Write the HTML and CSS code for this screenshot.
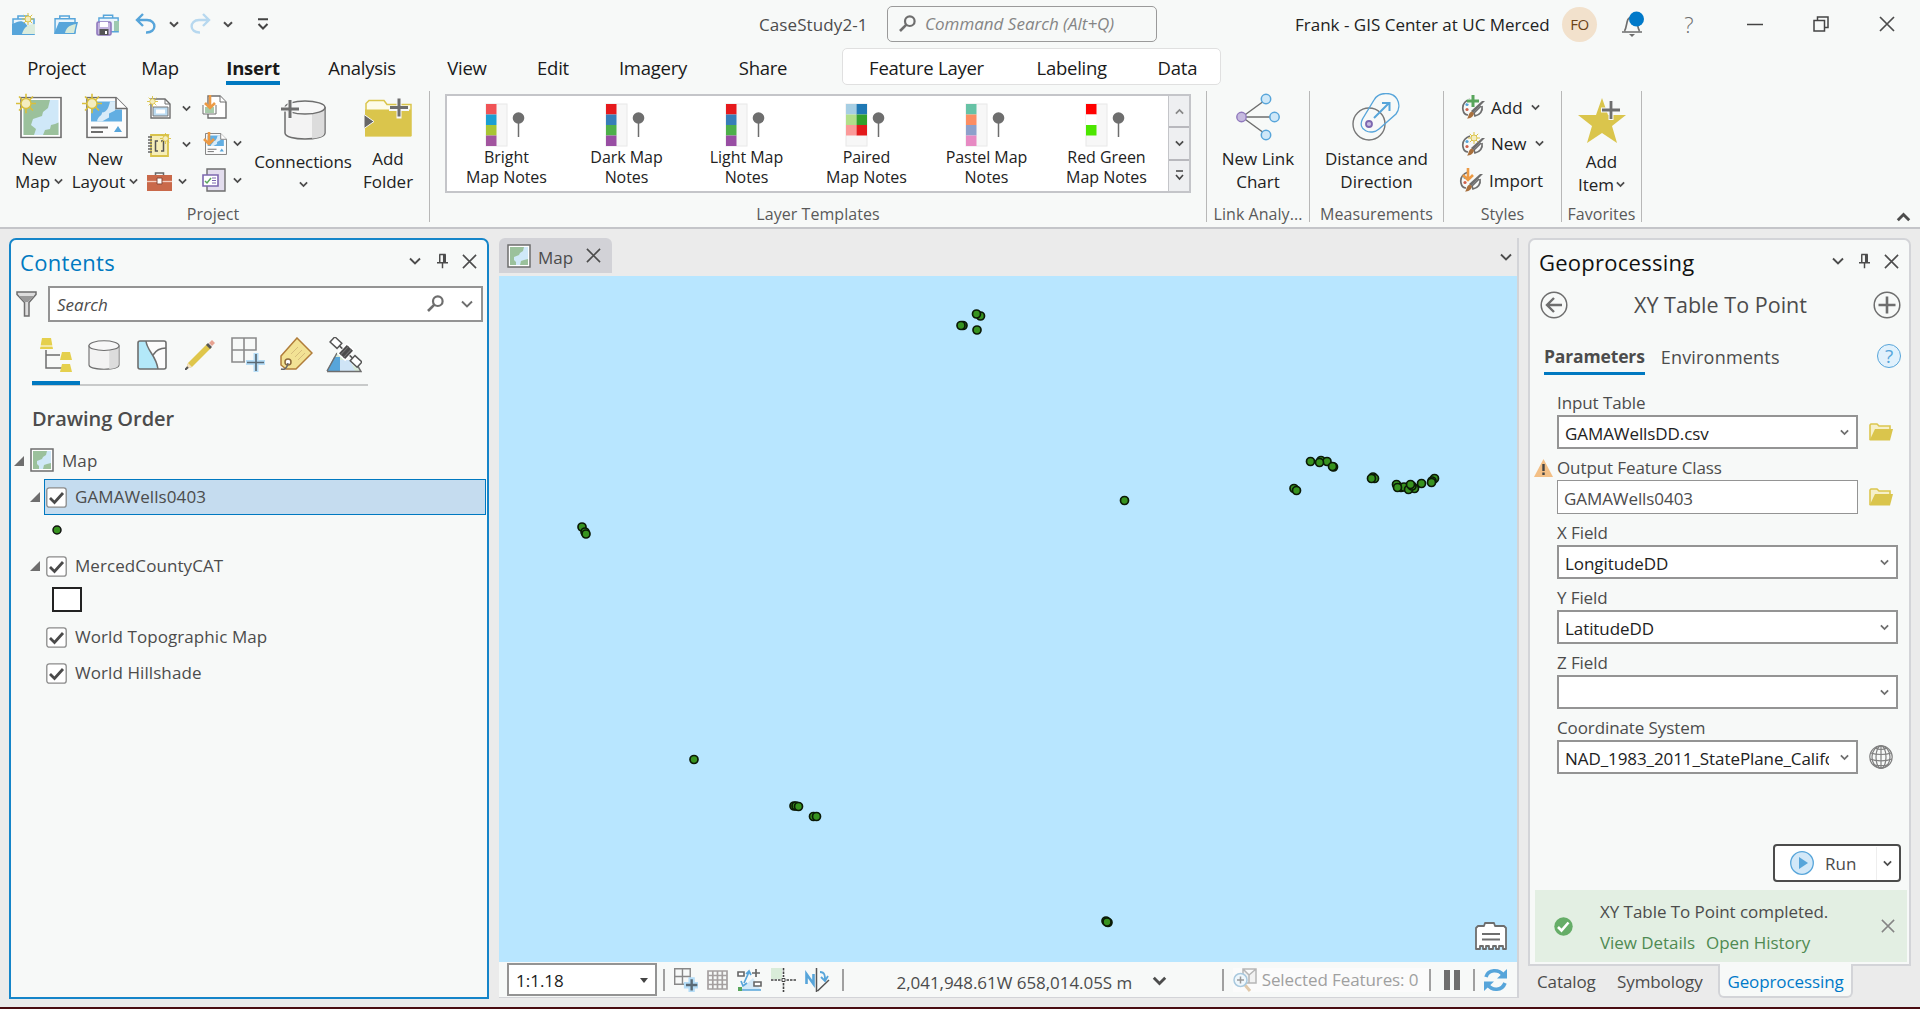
FILE: index.html
```html
<!DOCTYPE html>
<html lang="en">
<head>
<meta charset="utf-8">
<title>CaseStudy2-1</title>
<link rel="stylesheet" href="styles.css">
</head>
<body>
<svg class="sprite" aria-hidden="true">
  <symbol id="chev" viewBox="0 0 10 7"><path d="M1 1.2 5 5.2 9 1.2" fill="none" stroke="currentColor" stroke-width="2"/></symbol>
  <symbol id="chevthin" viewBox="0 0 12 9"><path d="M1 1.5 6 6.500 11 1.500" fill="none" stroke="currentColor" stroke-width="1.900"/></symbol>
  <symbol id="close" viewBox="0 0 16 16"><path d="M1 1 15 15M15 1 1 15" fill="none" stroke="currentColor" stroke-width="1.7"/></symbol>
  <symbol id="pin" viewBox="0 0 12 16"><path d="M2.5 1h7M3 1v9M9 1v9M0 10h12M6 10v6" fill="none" stroke="currentColor" stroke-width="1.6"/><path d="M6.5 1h2.5v9h-2.5z" fill="currentColor"/></symbol>
  <symbol id="lens" viewBox="0 0 17 17"><circle cx="10.8" cy="6.2" r="4.8" fill="none" stroke="currentColor" stroke-width="2.2"/><path d="M7.4 9.6 1 16" stroke="currentColor" stroke-width="2.6"/></symbol>
  <symbol id="sun" viewBox="0 0 20 20"><path d="M10 0v20M0 10h20M3 3l14 14M17 3 3 17" stroke="#d9bf3c" stroke-width="1.6"/><circle cx="10" cy="10" r="5" fill="#f4edc0" stroke="#d9bf3c" stroke-width="1.4"/></symbol>
  <symbol id="mapicon" viewBox="0 0 42 42"><path d="M1 1h40v40H1z" fill="#fff" stroke="#6e6e6e" stroke-width="1.6"/><path d="M3.500 3.500h35v35h-35z" fill="#cfe8f8"/><path d="M3.500 3.500H30l-2 8-5 4-1 4-9 3-2 6 5 4-2 6H3.500zM38.500 26v12.500H23l2-5 5-1 1-4 4-1z" fill="#9bc19c"/></symbol>
  <symbol id="mapmini" viewBox="0 0 24 24"><path d="M1 1h22v22H1z" fill="#fff" stroke="#6e6e6e" stroke-width="1.500"/><path d="M3 3h18v18H3z" fill="#cfe8f8"/><path d="M3 3h14l-1 4-3 2-1 2-5 2v3l2 2v3H3zM21 15v6h-8l1-4 3-1z" fill="#9bc19c"/></symbol>
  <symbol id="folder" viewBox="0 0 24 18"><path d="M1 17V2l1-1h6l2 2h11v5" fill="#f6f0c9" stroke="#dcc64e" stroke-width="1.6"/><path d="M.5 17.500 6 6h18l-3 11.500z" fill="#dac54c"/></symbol>
  <symbol id="check" viewBox="0 0 21 21"><rect x=".8" y=".8" width="19.400" height="19.400" rx="2.500" fill="#fff" stroke="#8a8a8a" stroke-width="1.3"/><path d="M4 11l4.500 4.500L17 6" fill="none" stroke="#4a4a4a" stroke-width="2.800"/></symbol>
  <symbol id="exp" viewBox="0 0 10 10"><path d="M10 0v10H0z" fill="#6e6e6e"/></symbol>
  <symbol id="cyl" viewBox="0 0 42 40"><path d="M1 7v26c0 8 40 8 40 0V7" fill="#f3f3f3" stroke="#6e6e6e" stroke-width="1.5"/><path d="M28 13c8-1 12.300-3 12.300-6v26c0 3-4 5-12.300 5.500z" fill="#dcdcdc"/><ellipse cx="21" cy="7.500" rx="20" ry="6.500" fill="#f7f7f7" stroke="#6e6e6e" stroke-width="1.5"/></symbol>
  <symbol id="palette" viewBox="0 0 25 24"><path d="M9 4C4 6 1 10 2 15c.6 3 2 5 5 5" fill="none" stroke="#6e6e6e" stroke-width="1.7"/><path d="M21 11c1 5-2 9-7 10l-1-3 7-7" fill="none" stroke="#6e6e6e" stroke-width="1.7"/><circle cx="6" cy="9.500" r="1.600" fill="#57a5da"/><circle cx="6" cy="14.500" r="1.600" fill="#d0604a"/><path d="M24 6 12 18l-2-2L21 6z" fill="#6e6e6e"/><path d="M11 16.500l2 2c-1 4-4 5-7 5 2-2 1-6 5-7z" fill="#a8703d"/></symbol>
  <symbol id="doc" viewBox="0 0 42 42"><path d="M1 1h29l11 11v29H1z" fill="#fcfcfc" stroke="#6e6e6e" stroke-width="1.6"/><path d="M5 5h24v8h7v12H5z" fill="#62aee2"/><path d="M11 25c1-6 5-5 5-9 5 0 7-6 8-11h5v9l-6 3v4l-7 4z" fill="#d8ebf8"/><path d="M30 1v11h11" fill="#fff" stroke="#6e6e6e" stroke-width="1.6"/><path d="M5 31h17M5 35.500h12" stroke="#6e6e6e" stroke-width="1.8"/><path d="M28 35.500l4-6 4 6z" fill="#57a5da"/></symbol>
  <symbol id="case" viewBox="0 0 24 20"><path d="M6 4V1h10v3" fill="none" stroke="#57a5da" stroke-width="1.6"/><path d="M1 4h21v15H1z" fill="#eaf5fc" stroke="#57a5da" stroke-width="1.5"/></symbol>
</svg>

<div class="app">
  <header class="titlebar">
    <div class="quick">
      <svg width="24" height="23" viewBox="0 0 24 23"><use href="#case" y="2" width="24" height="20"/><path d="M0 11c7-3 9-4 13-1l10 12H0z" fill="#57a5da"/><path d="M10 21c2-7 6-10 13-10v10z" fill="#dcecdc"/><use href="#sun" x="10" y="0" width="12" height="12"/></svg>
      <svg width="24" height="23" viewBox="0 0 24 23"><use href="#case" y="2" width="23" height="19"/><path d="M0 21 5 9h19l-3 12z" fill="#57a5da"/><path d="M11 20c1-5 4-8 11-9l-2 9z" fill="#d8ead9"/></svg>
      <svg width="24" height="23" viewBox="0 0 24 23"><use href="#case" x="2" y="1" width="22" height="19"/><path d="M18 8h5v10h-5z" fill="#9cc9b0"/><rect x="1" y="9" width="14" height="13" rx="1.500" fill="#c3b4de" stroke="#8f78bd" stroke-width="1.6"/><path d="M4 9h8v5H4z" fill="#fff"/><path d="M3.500 16h9v6h-9z" fill="#555"/><path d="M9 18h2v3H9z" fill="#fff"/></svg>
      <svg class="undo" width="22" height="22" viewBox="0 0 22 22"><path d="M8 1 2 7l6 6M2 7h10c10 0 10 13-1 12.500" fill="none" stroke="#57a5da" stroke-width="2.400"/></svg>
      <svg class="c1" width="10" height="7"><use href="#chev"/></svg>
      <svg class="redo" width="22" height="22" viewBox="0 0 22 22"><path d="M14 1l6 6-6 6M20 7H10C0 7 0 20 11 19.500" fill="none" stroke="#b7d8ef" stroke-width="2.400"/></svg>
      <svg class="c1" width="10" height="7"><use href="#chev"/></svg>
      <svg class="custom" width="12" height="13" viewBox="0 0 12 13"><path d="M1 1.200h10M1.500 6l4.500 4.500L10.500 6" fill="none" stroke="#444" stroke-width="2"/></svg>
    </div>
    <div class="doc-title">CaseStudy2-1</div>
    <div class="cmd"><svg width="17" height="17"><use href="#lens"/></svg><i>Command Search (Alt+Q)</i></div>
    <div class="user">Frank - GIS Center at UC Merced</div>
    <div class="avatar">FO</div>
    <svg class="bell" width="24" height="26" viewBox="0 0 24 26"><path d="M1 21h20M3.500 20c3-4 1-14 7.500-14s4.500 10 7.500 14" fill="none" stroke="#6e6e6e" stroke-width="1.7"/><path d="M8 23h6l-3 3z" fill="#6e6e6e"/><circle cx="15.500" cy="8" r="7.500" fill="#0079c9"/></svg>
    <div class="question">?</div>
    <svg class="win" width="16" height="16" viewBox="0 0 16 16"><path d="M0 8.500h16" stroke="#444" stroke-width="1.5"/></svg>
    <svg class="win w2" width="16" height="16" viewBox="0 0 16 16"><path d="M1 4.500h10.500V15H1zM4.500 4V1H15v10.500h-3" fill="none" stroke="#444" stroke-width="1.5"/></svg>
    <svg class="win w3" width="16" height="16"><use href="#close"/></svg>
  </header>

  <nav class="tabs">
    <span class="t113">Project</span><span class="t94">Map</span><span class="t92 on"><b>Insert</b></span><span class="t126">Analysis</span><span class="t84">View</span><span class="t88">Edit</span><span class="t112">Imagery</span><span class="t108">Share</span>
    <div class="context"><span class="t167">Feature Layer</span><span class="t124">Labeling</span><span class="t88">Data</span></div>
  </nav>

  <section class="ribbon">
    <div class="group g-project">
      <div class="body">
        <div class="big"><svg width="46" height="47" viewBox="0 0 46 47"><use href="#mapicon" x="4" y="3" width="42" height="42"/><use href="#sun" width="20" height="20"/></svg><span>New</span><span>Map<svg class="ch" width="9" height="7"><use href="#chev"/></svg></span></div>
        <div class="big"><svg width="46" height="47" viewBox="0 0 46 47"><use href="#doc" x="4" y="3" width="42" height="42"/><use href="#sun" width="20" height="20"/></svg><span>New</span><span>Layout<svg class="ch" width="9" height="7"><use href="#chev"/></svg></span></div>
        <div class="small">
          <div><svg width="25" height="24" viewBox="0 0 25 24"><path d="M4 3h14l5 5v14H4z" fill="#fff" stroke="#6e6e6e" stroke-width="1.4"/><path d="M18 3v5h5" fill="none" stroke="#6e6e6e"/><path d="M6 11h15v9H6z" fill="#bcdcf3" stroke="#777"/><path d="M9 15.500h9" stroke="#fff" stroke-width="4"/><use href="#sun" width="11" height="11"/></svg><svg class="ch" width="9" height="7"><use href="#chev"/></svg></div>
          <div><svg width="25" height="24" viewBox="0 0 25 24"><path d="M4 2h17v21H4z" fill="#f6eeb8" stroke="#d9c34c" stroke-width="1.800"/><path d="M1 4h4M1 7h4M1 10h4M1 13h4M1 16h4M1 19h4" stroke="#666" stroke-width="1.3"/><path d="M11 8H8.500v10H11M14 8h2.500v10H14" fill="none" stroke="#555" stroke-width="1.500"/><use href="#sun" x="13" y="0" width="11" height="11"/></svg><svg class="ch" width="9" height="7"><use href="#chev"/></svg></div>
          <div><svg width="25" height="24" viewBox="0 0 25 24"><path d="M8.500 8V4h8v4" fill="none" stroke="#666" stroke-width="1.500"/><path d="M0 6h25v16H0z" fill="#c9694a"/><path d="M0 12.500h25" stroke="#f3cfc2" stroke-width="1.300"/><path d="M10 9h5v6h-5z" fill="#fff" stroke="#8a4a38"/></svg><svg class="ch near" width="9" height="7"><use href="#chev"/></svg></div>
        </div>
        <div class="small second">
          <div><svg width="26" height="24" viewBox="0 0 26 24"><path d="M6 1h12l6 6v16H6z" fill="#fff" stroke="#6e6e6e" stroke-width="1.4"/><path d="M18 1v6h6M1 10v9h13v-9" fill="#fff" stroke="#6e6e6e"/><path d="M3 12h9v6H3z" fill="#a7cba9"/><path d="M8 0v13M3 8l5 5 5-5" fill="none" stroke="#ec9a45" stroke-width="2.600"/></svg></div>
          <div><svg width="26" height="24" viewBox="0 0 26 24"><use href="#doc" x="3" y="1" width="22" height="22"/><path d="M7 0v12M2 7l5 5 5-5" fill="none" stroke="#ec9a45" stroke-width="2.600"/></svg><svg class="ch" width="9" height="7"><use href="#chev"/></svg></div>
          <div><svg width="26" height="24" viewBox="0 0 26 24"><path d="M5 1h18v22H5z" fill="#e3ddee" stroke="#6e6e6e" stroke-width="1.4"/><path d="M1 7h15v11H1z" fill="#fff" stroke="#7d68b0" stroke-width="1.600"/><path d="M3 13l2 2 4-5" fill="none" stroke="#59a65c" stroke-width="1.500"/><path d="M10 10h4M10 12.500h4M10 15h4" stroke="#7d68b0"/></svg><svg class="ch" width="9" height="7"><use href="#chev"/></svg></div>
        </div>
        <div class="big conn"><svg width="46" height="42" viewBox="0 0 46 42"><use href="#cyl" x="4" y="1" width="42" height="40"/><path d="M10 0v20M0 10h20" stroke="#f7f8f8" stroke-width="5"/><path d="M10 1v18M1 10h18" stroke="#6e6e6e" stroke-width="3"/></svg><span>Connections</span><span class="only"><svg class="ch" width="9" height="7"><use href="#chev"/></svg></span></div>
        <div class="big fold"><svg width="48" height="47" viewBox="0 0 48 47"><path d="M2 42V10l3-3h15l3 4h24v31z" fill="#fdfbe9" stroke="#dac54c" stroke-width="1.5"/><path d="M1 16h46v27H1z" fill="#dac54c"/><path d="M0 21l10 7-10 7z" fill="#666" stroke="#f7f8f8"/><path d="M35 5v20M25 15h20" stroke="#f7f8f8" stroke-width="5"/><path d="M35 5v18M26 14h18" stroke="#6e6e6e" stroke-width="3"/></svg><span>Add</span><span>Folder</span></div>
      </div>
      <div class="glabel">Project</div>
    </div>

    <div class="group g-templates">
      <div class="body">
        <div class="gallery">
          <div class="item"><svg width="42" height="44" viewBox="0 0 42 44"><rect x="1" y="1" width="21" height="42" fill="#f7f7f7" stroke="#e8e8e8"/><path d="M1 1h10.500v10.500H1z" fill="#f05356"/><path d="M1 11.500h10.500V22H1z" fill="#1b9fd2"/><path d="M1 22h10.500v10.500H1z" fill="#a8c534"/><path d="M1 32.500h10.500V43H1z" fill="#a2559f"/><path d="M33.500 16v18" stroke="#6e6e6e" stroke-width="1.500"/><circle cx="33.500" cy="15" r="5.800" fill="#6e6e6e"/></svg><span>Bright<br>Map Notes</span></div>
          <div class="item"><svg width="42" height="44" viewBox="0 0 42 44"><rect x="1" y="1" width="21" height="42" fill="#f7f7f7" stroke="#e8e8e8"/><path d="M1 1h10.500v10.500H1z" fill="#e6191c"/><path d="M1 11.500h10.500V22H1z" fill="#377eb8"/><path d="M1 22h10.500v10.500H1z" fill="#4daf4a"/><path d="M1 32.500h10.500V43H1z" fill="#984ea3"/><path d="M33.500 16v18" stroke="#6e6e6e" stroke-width="1.500"/><circle cx="33.500" cy="15" r="5.800" fill="#6e6e6e"/></svg><span>Dark Map<br>Notes</span></div>
          <div class="item"><svg width="42" height="44" viewBox="0 0 42 44"><rect x="1" y="1" width="21" height="42" fill="#f7f7f7" stroke="#e8e8e8"/><path d="M1 1h10.500v10.500H1z" fill="#e6191c"/><path d="M1 11.500h10.500V22H1z" fill="#377eb8"/><path d="M1 22h10.500v10.500H1z" fill="#4daf4a"/><path d="M1 32.500h10.500V43H1z" fill="#984ea3"/><path d="M33.500 16v18" stroke="#6e6e6e" stroke-width="1.500"/><circle cx="33.500" cy="15" r="5.800" fill="#6e6e6e"/></svg><span>Light Map<br>Notes</span></div>
          <div class="item"><svg width="42" height="44" viewBox="0 0 42 44"><rect x="1" y="1" width="21" height="42" fill="#f7f7f7" stroke="#e8e8e8"/><path d="M1 1h10.500v10.500H1z" fill="#a6cee3"/><path d="M1 11.500h10.500V22H1z" fill="#b2df8a"/><path d="M1 22h10.500v10.500H1z" fill="#fb9a99"/><path d="M11.500 1H22v10.500H11.500z" fill="#1f78b4"/><path d="M11.500 11.500H22V22H11.500z" fill="#33a02c"/><path d="M11.500 22H22v10.500H11.500z" fill="#e31a1c"/><path d="M33.500 16v18" stroke="#6e6e6e" stroke-width="1.500"/><circle cx="33.500" cy="15" r="5.800" fill="#6e6e6e"/></svg><span>Paired<br>Map Notes</span></div>
          <div class="item"><svg width="42" height="44" viewBox="0 0 42 44"><rect x="1" y="1" width="21" height="42" fill="#f7f7f7" stroke="#e8e8e8"/><path d="M1 1h10.500v10.500H1z" fill="#66c2a5"/><path d="M1 11.500h10.500V22H1z" fill="#fc8d62"/><path d="M1 22h10.500v10.500H1z" fill="#8da0cb"/><path d="M1 32.500h10.500V43H1z" fill="#e78ac3"/><path d="M33.500 16v18" stroke="#6e6e6e" stroke-width="1.500"/><circle cx="33.500" cy="15" r="5.800" fill="#6e6e6e"/></svg><span>Pastel Map<br>Notes</span></div>
          <div class="item"><svg width="42" height="44" viewBox="0 0 42 44"><rect x="1" y="1" width="21" height="42" fill="#f7f7f7" stroke="#e8e8e8"/><path d="M1 1h10.500v10.500H1z" fill="#f00"/><path d="M1 11.500h10.500V22H1z" fill="#fff"/><path d="M1 22h10.500v10.500H1z" fill="#4ce600"/><path d="M33.500 16v18" stroke="#6e6e6e" stroke-width="1.500"/><circle cx="33.500" cy="15" r="5.800" fill="#6e6e6e"/></svg><span>Red Green<br>Map Notes</span></div>
          <div class="scroll">
            <div><svg class="up dim" width="9" height="7"><use href="#chev"/></svg></div>
            <div><svg width="9" height="7"><use href="#chev"/></svg></div>
            <div><svg width="9" height="11" viewBox="0 0 9 11"><path d="M1 1h7M1 5l3.500 4L8 5" fill="none" stroke="#444" stroke-width="1.600"/></svg></div>
          </div>
        </div>
      </div>
      <div class="glabel">Layer Templates</div>
    </div>

    <div class="group g-link">
      <div class="body"><div class="big"><svg width="44" height="47" viewBox="0 0 44 47"><path d="M6 23.500 30 6M6 23.500h32M6 23.500 30 41" stroke="#6e6e6e" stroke-width="1.500"/><circle cx="5.500" cy="23.500" r="4.700" fill="#c6badf" stroke="#9079bd" stroke-width="1.400"/><g fill="#cfe8f8" stroke="#57a5da" stroke-width="1.500"><circle cx="30" cy="5.500" r="4.700"/><circle cx="38.500" cy="23.500" r="4.700"/><circle cx="30" cy="41.500" r="4.700"/></g></svg><span>New Link</span><span>Chart</span></div></div>
      <div class="glabel">Link Analy...</div>
    </div>
    <div class="group g-meas">
      <div class="body"><div class="big"><svg width="48" height="48" viewBox="0 0 48 48"><circle cx="17" cy="31" r="16" fill="none" stroke="#777" stroke-width="1.400"/><path d="M10.500 26 22 7C27-2 41-1 45 6c3 5 2 11-1 15L27 36c-8 7-22 1-16.500-10z" fill="none" stroke="#57a5da" stroke-width="1.400"/><circle cx="17" cy="31" r="3" fill="#c6badf" stroke="#7d68b0" stroke-width="1.800"/><path d="M22 25 37 10M30 10h7.500v8" fill="none" stroke="#57a5da" stroke-width="2"/></svg><span>Distance and</span><span>Direction</span></div></div>
      <div class="glabel">Measurements</div>
    </div>
    <div class="group g-styles">
      <div class="body col">
        <div class="line"><svg width="25" height="24" viewBox="0 0 25 24"><use href="#palette" width="25" height="24"/><path d="M12 0v12M6 6h12" stroke="#f7f8f8" stroke-width="5"/><path d="M12 0v12M6 6h12" stroke="#59a65c" stroke-width="3"/></svg>Add<svg class="ch" width="9" height="7"><use href="#chev"/></svg></div>
        <div class="line"><svg width="25" height="24" viewBox="0 0 25 24"><use href="#palette" width="25" height="24"/><use href="#sun" x="7" width="12" height="12"/></svg>New<svg class="ch" width="9" height="7"><use href="#chev"/></svg></div>
        <div class="line imp"><svg width="25" height="24" viewBox="0 0 25 24"><use href="#palette" width="25" height="24"/><path d="M9 0v12M4 7l5 5 5-5" fill="none" stroke="#ec9a45" stroke-width="2.600"/></svg>Import</div>
      </div>
      <div class="glabel">Styles</div>
    </div>
    <div class="group g-fav">
      <div class="body"><div class="big low"><svg width="48" height="48" viewBox="0 0 48 48"><path d="M24 2l6 17h18L34 30l5 17-15-10L9 47l5-17L0 19h18z" fill="#dac54c"/><path d="M33 4v20M23 14h20" stroke="#f7f8f8" stroke-width="5"/><path d="M33 5v18M24 14h18" stroke="#6e6e6e" stroke-width="2.800"/></svg><span>Add</span><span>Item<svg class="ch tight" width="9" height="7"><use href="#chev"/></svg></span></div></div>
      <div class="glabel">Favorites</div>
    </div>
    <div class="collapse"><svg class="up" width="15" height="10"><use href="#chev"/></svg></div>
  </section>

  <main class="work">
    <aside class="pane contents">
      <div class="pane-head"><h2>Contents</h2><svg width="12" height="9"><use href="#chevthin"/></svg><svg class="p" width="11" height="16"><use href="#pin"/></svg><svg width="15" height="15"><use href="#close"/></svg></div>
      <div class="search-row">
        <svg width="21" height="26" viewBox="0 0 21 26"><path d="M1 1h19v2.500l-7 8V25H8.500V11.500L1 3.500z" fill="#ddd" stroke="#6e6e6e" stroke-width="1.500"/><path d="M3 5h15l-6 6h-3z" fill="#999"/></svg>
        <div class="search"><i>Search</i><svg width="17" height="17"><use href="#lens"/></svg><svg class="sc" width="12" height="9"><use href="#chevthin"/></svg></div>
      </div>
      <div class="modes">
        <div class="on"><svg width="34" height="36" viewBox="0 0 34 36"><path d="M7 13v18h16M7 18h14" fill="none" stroke="#6e6e6e" stroke-width="1.500"/><path d="M3 1h9l2 11H1z" fill="#e5d04d"/><path d="M1 9h13" stroke="#fff"/><path d="M23 15h8l2 8H21zM23 27h8l2 8H21z" fill="#e5d04d"/></svg></div>
        <div><svg width="32" height="30"><use href="#cyl"/></svg></div>
        <div><svg width="30" height="30" viewBox="0 0 30 30"><rect x="1" y="1" width="28" height="28" rx="2" fill="#fcfcfc"/><path d="M1 1h8c1 10 10 14 12 28H1z" fill="#b3e8f9"/><rect x="1" y="1" width="28" height="28" rx="2" fill="none" stroke="#6e6e6e" stroke-width="1.600"/><path d="M9 1c1 10 10 14 12 28M16 15c3-5 8-7 13-7" fill="none" stroke="#6e6e6e" stroke-width="1.500"/></svg></div>
        <div><svg width="30" height="30" viewBox="0 0 30 30"><path d="M1 29l2-6L22 4l4 4L7 27z" fill="#dfc64b"/><path d="M1 29l2-6 4 4z" fill="#f4e0c0"/><path d="M0 30l3-3" stroke="#555" stroke-width="2"/><path d="M21 5l2-2 4 4-2 2z" fill="#555"/><path d="M24 3l3-3 3 3-3 3z" fill="#e7a392"/></svg></div>
        <div><svg width="34" height="35" viewBox="0 0 34 35"><path d="M1 1h24v12H1zM13 1v24M1 13v12h13" fill="none" stroke="#8a8a8a" stroke-width="1.600"/><path d="M25 16v19M15 25.500h19" stroke="#b5ddf7" stroke-width="5"/><path d="M25 17v17M16 25.500h17" stroke="#5a6a75" stroke-width="1.700"/></svg></div>
        <div><svg width="34" height="35" viewBox="0 0 34 35"><path d="M2 19 18 1l15 15-16 16H7l-5-4z" fill="#f2e294" stroke="#b07d3a" stroke-width="1.500"/><path d="M12 17l7-7M16 20l7-7M19 23l7-7" stroke="#d6bd7c"/><circle cx="9" cy="25" r="3" fill="#fff" stroke="#8c6a3a" stroke-width="1.500"/><path d="M9 26c-1 6-4 7-7 6" fill="none" stroke="#666" stroke-width="1.500"/></svg></div>
        <div><svg width="36" height="36" viewBox="0 0 36 36"><path d="M1 34 11 15l8 7 16 12z" fill="#d7ead8"/><path d="M1 34l7-14h6v14z" fill="#57a5da"/><path d="M14 23h10l5 11H14z" fill="#cfe4f6"/><path d="M1 34.500h34L30 26M1 34l10-18" fill="none" stroke="#6e6e6e" stroke-width="1.500"/><g transform="rotate(43 20 15)"><path d="M15 8.500h10v13H15z" fill="#4c4c4c" stroke="#fff" stroke-width="1.500"/><path d="M18 9v12M22 9v12" stroke="#777"/><path d="M11 15h4M25 15h4" stroke="#555" stroke-width="1.500"/><path d="M1.500 11.500h9.500v7H1.500zM29 11.500h9.500v7H29z" fill="#fff" stroke="#555" stroke-width="1.500"/></g></svg></div>
      </div>
      <h3>Drawing Order</h3>
      <div class="tree">
        <div class="row map"><svg width="10" height="10"><use href="#exp"/></svg><svg width="24" height="24" class="mi"><use href="#mapmini"/></svg><span>Map</span></div>
        <div class="row sel"><div class="tw"><svg width="10" height="10"><use href="#exp"/></svg></div><div class="hl"><svg width="21" height="21"><use href="#check"/></svg><span>GAMAWells0403</span></div></div>
        <div class="row sym"><svg width="10" height="10" viewBox="0 0 10 10"><circle cx="5" cy="5" r="4" fill="#37931f" stroke="#111" stroke-width="1.500"/></svg></div>
        <div class="row"><div class="tw"><svg width="10" height="10"><use href="#exp"/></svg></div><div class="nl"><svg width="21" height="21"><use href="#check"/></svg><span>MercedCountyCAT</span></div></div>
        <div class="row poly"><i></i></div>
        <div class="row"><div class="tw"></div><div class="nl"><svg width="21" height="21"><use href="#check"/></svg><span>World Topographic Map</span></div></div>
        <div class="row"><div class="tw"></div><div class="nl"><svg width="21" height="21"><use href="#check"/></svg><span>World Hillshade</span></div></div>
      </div>
    </aside>

    <section class="view">
      <div class="view-tabs"><div class="vt"><svg width="24" height="24"><use href="#mapmini"/></svg><span>Map</span><svg width="15" height="15" class="x"><use href="#close"/></svg></div><svg class="more" width="12" height="9"><use href="#chevthin"/></svg></div>
      <div class="canvas">
        <svg class="points" viewBox="499 276 1019 686" width="1019" height="686"><g fill="#37931f" stroke="#0b1a07" stroke-width="1.700">
          <circle cx="963" cy="325.500" r="4"/><circle cx="961" cy="325.500" r="4"/><circle cx="980.500" cy="316" r="4"/><circle cx="976.500" cy="314" r="4"/><circle cx="977" cy="330" r="4"/>
          <circle cx="582" cy="527" r="4"/><circle cx="585" cy="532" r="4"/><circle cx="586" cy="534" r="4"/><circle cx="1124.500" cy="500.500" r="4"/><circle cx="694" cy="759.500" r="4"/>
          <circle cx="794" cy="806" r="4"/><circle cx="796" cy="806" r="4"/><circle cx="798.500" cy="806.500" r="4"/><circle cx="813.500" cy="816.500" r="4"/><circle cx="816.500" cy="816.500" r="4"/>
          <circle cx="1106" cy="921" r="4"/><circle cx="1108" cy="922.500" r="4"/><circle cx="1107" cy="922" r="4"/>
          <circle cx="1310.500" cy="461.500" r="4"/><circle cx="1321" cy="460.500" r="4"/><circle cx="1327" cy="461.500" r="4"/><circle cx="1319.500" cy="462.500" r="4"/><circle cx="1333.500" cy="467" r="4"/><circle cx="1332.500" cy="466.500" r="4"/>
          <circle cx="1294" cy="488.500" r="4"/><circle cx="1296.500" cy="490.500" r="4"/><circle cx="1373" cy="477" r="4"/><circle cx="1374.500" cy="478.500" r="4"/><circle cx="1371.500" cy="478.500" r="4"/>
          <circle cx="1396.500" cy="484.500" r="4"/><circle cx="1401" cy="487.500" r="4"/><circle cx="1404" cy="487" r="4"/><circle cx="1397.500" cy="487.500" r="4"/><circle cx="1414.500" cy="488.500" r="4"/><circle cx="1408.500" cy="489.500" r="4"/><circle cx="1412" cy="486" r="4"/><circle cx="1410.500" cy="484.500" r="4"/><circle cx="1421.500" cy="483.500" r="4"/><circle cx="1434.500" cy="478.500" r="4"/><circle cx="1432" cy="481" r="4"/><circle cx="1431.500" cy="482.500" r="4"/>
        </g></svg>
        <svg class="note" width="32" height="29" viewBox="0 0 32 29"><path d="M1 27V6l2-2h6l1-3h9l1 3h9l2 2v21h-3v-3h-4v3h-3v-3h-3v3h-4v-3h-3v3h-3v-3H5v3z" fill="#fff" stroke="#6e6e6e" stroke-width="1.800" stroke-linejoin="round"/><path d="M7 12h18M7 17.500h18" stroke="#6e6e6e" stroke-width="2"/></svg>
      </div>
      <div class="status">
        <div class="scale"><span>1:1.18</span><svg width="8" height="5" viewBox="0 0 8 5"><path d="M0 0h8L4 5z" fill="#444"/></svg></div>
        <i class="sep"></i>
        <svg width="24" height="24" viewBox="0 0 34 34"><path d="M1 1h22v22H1zM12 1v22M1 12h22" fill="none" stroke="#888" stroke-width="2"/><path d="M25 13v21M14 24.500h20" stroke="#b5ddf7" stroke-width="9"/><path d="M25 16v16M17 24h16" stroke="#5a6a75" stroke-width="3.400"/></svg>
        <svg width="21" height="20" viewBox="0 0 21 20"><path d="M1 1h19v18H1zM1 5.500h19M1 10h19M1 14.500h19M5.800 1v18M10.500 1v18M15.300 1v18" fill="none" stroke="#a5a0a0" stroke-width="1.700"/></svg>
        <svg width="25" height="24" viewBox="0 0 25 24"><path d="M3 22 16 10l8 12z" fill="#d3e9f8"/><path d="M1 4h6v4H1zM17 14h7v4h-7z" fill="#fff" stroke="#666" stroke-width="1.600"/><path d="M7 15 12 4M4 13l2 5 4-3M9 6l3-3 2 4" fill="none" stroke="#57a5da" stroke-width="1.700"/><path d="M19 1v8M15 5h8" stroke="#666" stroke-width="1.700"/><path d="M2 22h22" stroke="#57a5da" stroke-width="1.500"/><path d="M1 19h4v4H1z" fill="#59a65c"/></svg>
        <svg width="25" height="24" viewBox="0 0 25 24"><path d="M0 0h11v11H0z" fill="#d9ecd9"/><path d="M12.500 0v9M12.500 15v9M0 12h9.500M15.500 12H25" stroke="#444" stroke-width="1.600" stroke-dasharray="2.500 1"/><path d="M11 10.500h3v3h-3z" fill="none" stroke="#444"/></svg>
        <svg width="25" height="24" viewBox="0 0 25 24"><path d="M1.500 16V6l7 10V6" fill="none" stroke="#57a5da" stroke-width="2.600"/><path d="M11.500 0v24M12.500 23 24 12" stroke="#555" stroke-width="1.500"/><path d="M15 4c5 0 5 4 5 8M16 9l4 4 3-5" fill="none" stroke="#57a5da" stroke-width="1.800"/></svg>
        <i class="sep sep2"></i>
        <span class="coord">2,041,948.61W 658,014.05S m</span>
        <svg class="cc" width="15" height="10"><use href="#chev"/></svg>
        <i class="sep sep3"></i>
        <div class="selected"><svg width="24" height="24" viewBox="0 0 24 24"><path d="M10 1h13v14H10zM10 1l6 6 7-6M16 7v8" fill="#f2f2f2" stroke="#b6b6b6" stroke-width="1.500"/><path d="M12 17l5 6" stroke="#e0c9ab" stroke-width="3"/><circle cx="7.500" cy="12" r="6.500" fill="#eff7fc" stroke="#a9c9de" stroke-width="1.500"/><path d="M7.500 8.500v7M4 12h7" stroke="#999" stroke-width="1.500"/></svg><span>Selected Features: 0</span></div>
        <i class="sep sep4"></i>
        <svg class="pause" width="16" height="20" viewBox="0 0 16 20"><path d="M0 0h6v20H0zM10 0h6v20h-6z" fill="#6e6e6e"/></svg>
        <i class="sep sep5"></i>
        <svg class="refresh" width="25" height="24" viewBox="0 0 25 24"><path d="M3 9C5 1 16 1 20 7M22 15C19 23 9 23 5 17" fill="none" stroke="#57a5da" stroke-width="3.600"/><path d="M24 1v9.500h-10zM1 23v-9.500h10z" fill="#57a5da"/></svg>
      </div>
    </section>

    <div class="right">
      <aside class="pane geo">
        <div class="pane-head"><h2>Geoprocessing</h2><svg width="12" height="9"><use href="#chevthin"/></svg><svg class="p" width="11" height="16"><use href="#pin"/></svg><svg width="15" height="15"><use href="#close"/></svg></div>
        <div class="tool"><svg width="28" height="28" viewBox="0 0 28 28"><circle cx="14" cy="14" r="12.800" fill="none" stroke="#6e6e6e" stroke-width="1.500"/><path d="M22 14H7M14 7l-7 7 7 7" fill="none" stroke="#6e6e6e" stroke-width="2.400"/></svg><span>XY Table To Point</span><svg width="28" height="28" viewBox="0 0 28 28"><circle cx="14" cy="14" r="12.800" fill="none" stroke="#6e6e6e" stroke-width="1.500"/><path d="M14 5.500v17M5.500 14h17" stroke="#6e6e6e" stroke-width="2.600"/></svg></div>
        <div class="ptabs"><b>Parameters</b><span>Environments</span><div class="help">?</div></div>
        <div class="form">
          <label>Input Table</label>
          <div class="field"><div class="box"><span>GAMAWellsDD.csv</span><svg width="9" height="7"><use href="#chev"/></svg></div><svg class="f" width="24" height="18"><use href="#folder"/></svg></div>
          <label class="warn"><svg width="19" height="18" viewBox="0 0 19 18"><path d="M9.500 0 19 18H0z" fill="#f3bf85"/><path d="M9.500 5v7M9.500 13.500v2.500" stroke="#444" stroke-width="2.400"/></svg>Output Feature Class</label>
          <div class="field"><div class="box thin"><span>GAMAWells0403</span></div><svg class="f" width="24" height="18"><use href="#folder"/></svg></div>
          <label>X Field</label>
          <div class="field"><div class="box"><span>LongitudeDD</span><svg width="9" height="7"><use href="#chev"/></svg></div></div>
          <label>Y Field</label>
          <div class="field"><div class="box"><span>LatitudeDD</span><svg width="9" height="7"><use href="#chev"/></svg></div></div>
          <label>Z Field</label>
          <div class="field"><div class="box"><span></span><svg width="9" height="7"><use href="#chev"/></svg></div></div>
          <label>Coordinate System</label>
          <div class="field"><div class="box"><span>NAD_1983_2011_StatePlane_California</span><svg width="9" height="7"><use href="#chev"/></svg></div><svg class="f" width="24" height="24" viewBox="0 0 24 24"><g fill="none" stroke="#808080" stroke-width="1.200"><circle cx="12" cy="12" r="11.200"/><ellipse cx="12" cy="12" rx="5" ry="11.200"/><ellipse cx="12" cy="12" rx="9" ry="11.200"/><path d="M12 1v22M2 8c5 2 15 2 20 0M1 14c6 2.500 16 2.500 22 0M4 19.500c5 1.500 11 1.500 16 0M6 3c4 2 8 2 12 0"/></g></svg></div>
        </div>
        <div class="run"><svg width="24" height="24" viewBox="0 0 24 24"><circle cx="12" cy="12" r="11.300" fill="#d2e8f8" stroke="#57a5da" stroke-width="1.300"/><path d="M9 6v12l9-6z" fill="#57a5da"/></svg><span>Run</span><i></i><svg width="9" height="7"><use href="#chev"/></svg></div>
        <div class="toast">
          <svg width="19" height="19" viewBox="0 0 19 19"><circle cx="9.500" cy="9.500" r="9.200" fill="#66ad68"/><path d="M4 10l3.500 3.500 7-8" fill="none" stroke="#fff" stroke-width="2.600"/></svg>
          <div class="msg"><div>XY Table To Point completed.</div><div class="links"><span>View Details</span><span>Open History</span></div></div>
          <svg width="14" height="14" class="tx"><use href="#close"/></svg>
        </div>
      </aside>
      <div class="dock"><span class="cat">Catalog</span><span class="symb">Symbology</span><span class="act">Geoprocessing</span></div>
    </div>
  </main>
  <footer class="edge"></footer>
</div>
</body>
</html>
```
FILE: styles.css
```css
* { box-sizing: border-box; }
body { margin: 0; font-family: "Open Sans", "Noto Sans", sans-serif; font-size: 17px; letter-spacing: 0; color: #4c4c4c; background: #ebebeb; overflow: hidden; }
h2, h3 { margin: 0; font-weight: 400; }
svg { flex: none; display: block; color: #4c4c4c; }
.sprite { position: absolute; width: 0; height: 0; }
.app { width: 1920px; height: 1009px; display: flex; flex-direction: column; }
.up { transform: scaleY(-1); }

/* title bar */
.titlebar { height: 46px; flex: none; background: #f7f9f8; display: flex; align-items: center; padding-top: 2px; white-space: nowrap; }
.quick { display: flex; align-items: center; width: 270px; padding-left: 12px; gap: 18px; flex: none; }
.quick .undo { margin-left: -3px; }
.quick .c1 { margin-left: -6px; }
.quick .redo { margin-left: -8px; }
.quick .custom { margin-left: 6px; }
.doc-title { width: 617px; padding-left: 489px; flex: none; letter-spacing: .1px; }
.cmd { width: 270px; height: 36px; flex: none; margin-top: -1px; border: 1.5px solid #9a9a9a; border-radius: 5px; display: flex; align-items: center; padding-left: 11px; gap: 9px; color: #858585; letter-spacing: 0; }
.cmd svg { color: #6e6e6e; }
.user { width: 255px; margin-left: 138px; color: #222; flex: none; letter-spacing: 0; }
.avatar { width: 35px; height: 35px; border-radius: 50%; background: #f2e1cc; color: #6b4318; font-size: 15px; letter-spacing: -.4px; display: flex; align-items: center; justify-content: center; margin-left: 12px; }
.bell { margin-left: 24px; }
.question { font-size: 22px; width: 20px; margin-left: 34px; text-align: center; color: #6e6e6e; font-weight: 300; }
.win { margin-left: 48px; }
.w2, .w3 { margin-left: 50px; }

/* ribbon tabs */
.tabs { height: 40px; flex: none; background: #f7f9f8; display: flex; align-items: center; font-size: 18.500px; letter-spacing: -.25px; color: #1a1a1a; padding-top: 1px; }
.tabs span { text-align: center; height: 36px; line-height: 37px; flex: none; display: block; }
.tabs .on b { display: inline-block; font-weight: 700; height: 36px; border-bottom: 4px solid #0079c1; line-height: 37px; }
.t84 { width: 84px; } .t88 { width: 88px; } .t92 { width: 92px; } .t94 { width: 94px; } .t108 { width: 108px; }
.t112 { width: 112px; } .t113 { width: 113px; } .t124 { width: 124px; } .t126 { width: 126px; } .t167 { width: 167px; }
.context { display: flex; margin-left: 25px; width: 379px; height: 37px; border: 1px solid #e0e0e0; border-radius: 5px; background: #fff; }
.context span { margin-right: -.3px; line-height: 37px; }

/* ribbon */
.ribbon { height: 143px; flex: none; background: #f7f9f8; border-bottom: 2px solid #c4c5c9; display: flex; padding-top: 5px; color: #222; }
.group { height: 131px; border-right: 1.500px solid #b8b8b8; display: flex; flex-direction: column; flex: none; }
.body { height: 108px; flex: none; display: flex; }
.glabel { text-align: center; color: #5a5a5a; line-height: 23px; margin-top: 4px; height: 19px; font-size: 16px; letter-spacing: .05px; white-space: nowrap; flex: none; }
.g-project { width: 430px; } .g-templates { width: 777px; } .g-link { width: 103px; } .g-meas { width: 134px; } .g-styles { width: 118px; } .g-fav { width: 80px; }
.g-project .glabel { padding-right: 3px; }
.big { display: flex; flex-direction: column; align-items: center; padding-top: 2px; line-height: 23px; white-space: nowrap; }
.big > svg { margin-bottom: 6px; height: 48px; }
.big span { display: flex; align-items: center; }
.ch { margin-left: 4px; }
.ch.tight { margin-left: 2px; }
.g-project .body { padding-left: 6px; }
.g-project .big { width: 66px; }
.small { width: 56px; padding-left: 9px; display: flex; flex-direction: column; gap: 12.500px; padding-top: 5px; }
.small > div { display: flex; align-items: center; height: 24px; }
.small .ch { margin-left: 10px; }
.small .ch.near { margin-left: 6px; }
.second { width: 57px; padding-left: 8px; padding-top: 4px; }
.second .ch { margin-left: 5px; }
.g-project .conn { width: 104px; padding-top: 5px; letter-spacing: -.1px; }
.only .ch { margin: 8px 0 0; }
.g-project .fold { width: 66px; }
.gallery { margin: 3px 0 0 15px; width: 746px; height: 99px; border: 2px solid #c4c5c9; background: #fff; display: flex; }
.item { width: 120px; text-align: center; padding: 7px 1px 0 0; line-height: 20px; font-size: 16px; letter-spacing: -.05px; white-space: nowrap; display: flex; flex-direction: column; align-items: center; flex: none; }
.item svg { margin-left: -2px; }
.scroll { margin-left: auto; width: 21px; border-left: 1px solid #c4c5c9; display: flex; flex-direction: column; background: #eeeff1; }
.scroll div { flex: 1; display: flex; align-items: center; justify-content: center; }
.scroll div + div { border-top: 2px solid #b8b8bd; }
.dim { color: #888; }
.g-link .body, .g-meas .body, .g-fav .body { justify-content: center; }
.low.big { padding-top: 5px; }
.col { flex-direction: column; gap: 12.500px; padding: 4px 0 0 17px; }
.line { display: flex; align-items: center; height: 24px; }
.line > svg:first-child { margin-right: 5px; }
.line .ch { margin-left: 8px; }
.imp { margin-left: -2px; }
.collapse { margin-left: 254px; align-self: flex-end; padding-bottom: 5px; }

/* work area */
.work { flex: 1; display: flex; min-height: 0; padding-top: 9px; }
.pane { background: #f7f9f8; border: 2px solid #d3d4d8; border-radius: 7px 7px 0 0; }
.contents { margin-left: 9px; width: 480px; height: 761px; border-color: #1585c9; flex: none; }
.pane-head { display: flex; align-items: center; height: 46px; padding: 0 10px 2px 9px; }
.pane-head h2 { flex: 1; font-size: 22px; letter-spacing: .25px; color: #111; }
.contents h2 { color: #0079c1; letter-spacing: .3px; }
.pane-head .p { margin: 0 14px 0 16px; }
.pane-head svg { margin-top: -2px; }
.geo .pane-head .p { margin-left: 15px; }
.pane-head svg.p { margin-top: -2px; }
.search-row { display: flex; align-items: center; padding-left: 5px; gap: 11px; height: 36px; }
.search { width: 435px; height: 36px; border: 2px solid #949494; background: #fff; display: flex; align-items: center; padding: 0 8px 0 7px; }
.search i { flex: 1; }
.search svg { color: #6e6e6e; }
.search svg:first-of-type { margin-top: -2px; margin-right: 1px; }
.search .sc { margin-left: 16px; }
.modes { display: grid; grid-template-columns: repeat(7, 48px); margin: 8px 0 0 21px; width: 336px; height: 56px; border-bottom: 2px solid #c8caca; }
.modes div { display: flex; align-items: center; justify-content: center; padding-bottom: 6px; height: 55px; }
.modes .on { border-bottom: 4px solid #0079c1; padding: 0 0 2px 0; }
.contents h3 { font-size: 20px; font-weight: 600; margin-left: 21px; line-height: 26px; margin-top: 20px; letter-spacing: -.05px; }
.tree { margin-top: 11px; }
.row { height: 36px; display: flex; align-items: center; }
.row.map { padding-left: 3px; gap: 6px; }
.row.map .mi { margin: -2px 2px 0 0; }
.row span { margin-top: -2px; letter-spacing: .08px; }
.tw { width: 33px; padding-left: 19px; flex: none; }
.hl, .nl { flex: 1; height: 36px; display: flex; align-items: center; gap: 8px; padding-left: 2px; }
.hl { border: 1.500px solid #0079c1; background: #c5dcef; margin-right: 1px; padding-left: 1px; }
.sym { height: 33px; padding-left: 41px; }
.sym svg { margin-top: -3px; }
.poly { padding-left: 41px; height: 35px; }
.poly i { width: 30px; height: 25px; border: 2px solid #222; background: #fff; margin-top: -5px; }

/* map view */
.view { margin-left: 10px; width: 1020px; flex: none; height: 760px; display: flex; flex-direction: column; border-right: 2px solid #d3d4d8; }
.view-tabs { height: 38px; display: flex; justify-content: space-between; padding-right: 5px; flex: none; }
.vt { width: 113px; height: 35px; background: #d2d2d7; border-radius: 6px 6px 0 0; display: flex; align-items: center; padding-left: 8px; }
.vt span { margin: 3px 13px 0 7px; }
.more { align-self: center; }
.canvas { height: 686px; background: #b8e6ff; position: relative; flex: none; overflow: hidden; }
.points { position: absolute; left: 0; top: 0; }
.note { position: absolute; right: 10px; bottom: 11px; }
.status { flex: 1; background: #f7f9f8; display: flex; align-items: center; padding-left: 8px; white-space: nowrap; border-bottom: 1px solid #d3d4d8; }
.status > svg { margin-right: 9px; }
.scale { width: 150px; height: 33px; border: 2px solid #949494; background: #fff; display: flex; align-items: center; justify-content: space-between; padding: 2px 7px 0; color: #222; }
.sep { width: 2px; height: 22px; flex: none; background: #a0a0a0; margin: 0 9px 0 6px; }
.sep2 { margin: 0 53px 0 3px; }
.coord { width: 244px; padding-top: 5px; letter-spacing: -.05px; }
.status > .cc { margin: 2px 55px 0 12px; }
.selected { display: flex; align-items: center; gap: 5px; color: #a0a0a0; width: 197px; background: #fbfbfb; letter-spacing: -.1px; }
.sep3 { margin: 0 9px 0 0; }
.sep4 { margin: 0 13px 0 0; }
.status > .pause { margin-right: 13px; }
.sep5 { margin: 0 8px 0 0; }

/* geoprocessing */
.right { margin-left: 9px; width: 383px; display: flex; flex-direction: column; }
.geo { height: 728px; display: flex; flex-direction: column; flex: none; }
.tool { display: flex; align-items: center; justify-content: space-between; padding: 0 8px 0 10px; height: 38px; font-size: 21.500px; letter-spacing: .03px; }
.tool span { margin-top: -2px; }
.ptabs { display: flex; align-items: center; height: 52px; margin-top: 7px; padding: 0 8px 0 14px; }
.ptabs b { font-weight: 700; border-bottom: 3px solid #0079c1; line-height: 32px; margin-right: 16px; font-size: 17.500px; letter-spacing: -.15px; }
.ptabs span { flex: 1; font-size: 18px; letter-spacing: .2px; }
.help { width: 24px; height: 24px; border: 1.500px solid #57a5da; border-radius: 50%; background: #e1f1fc; color: #57a5da; font-size: 19px; display: flex; align-items: center; justify-content: center; margin-top: -3px; }
.form { padding: 1px 11px 0 27px; }
.form label { display: block; height: 25px; line-height: 25px; margin-top: 6px; white-space: nowrap; letter-spacing: -.1px; }
.form label.warn { display: flex; align-items: center; gap: 4px; margin-left: -23px; }
.field { display: flex; align-items: center; height: 34px; gap: 11px; }
.box { flex: 1; height: 34px; border: 2px solid #949494; background: #fff; color: #222; display: flex; align-items: center; padding: 0 7px 0 6px; min-width: 0; letter-spacing: -.08px; }
.box span { flex: 1; overflow: hidden; white-space: nowrap; margin: 2px 11px 0 0; }
.box svg { color: #6e6e6e; }
.thin { border-width: 1.500px; color: #4c4c4c; }
.field .f { margin-right: 5px; }
.run { margin: 70px 8px 0 auto; width: 128px; height: 38px; border: 2px solid #4c4c4c; border-radius: 4px; background: #fff; display: flex; align-items: center; padding-left: 15px; flex: none; }
.run span { margin-left: 11px; width: 51px; }
.run i { width: 1px; height: 33px; background: #eee; margin-right: 6px; }
.toast { margin: auto 2px 2px 5px; height: 72px; background: #e3efe3; display: flex; align-items: center; padding: 0 12px 0 19px; flex: none; }
.msg { flex: 1; margin-left: 27px; line-height: 31px; padding-top: 1px; white-space: nowrap; letter-spacing: -.05px; }
.links { color: #4f8a52; display: flex; gap: 11px; }
.tx { color: #858585; }
.dock { height: 34px; display: flex; padding-left: 9px; line-height: 32px; letter-spacing: -.1px; }
.cat { width: 80px; } .symb { width: 101px; }
.act { width: 135px; height: 34px; margin-top: -2px; background: #f7f9f8; border: 2px solid #d3d4d8; border-top: 0; border-radius: 0 0 6px 6px; color: #0079c9; text-align: center; line-height: 35px; }
.edge { height: 2px; background: #4a0d12; flex: none; }
```
